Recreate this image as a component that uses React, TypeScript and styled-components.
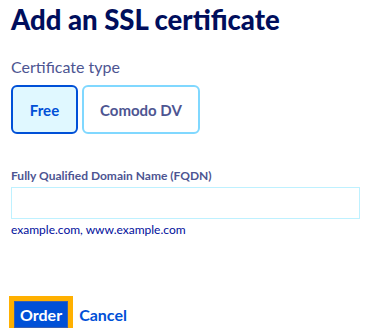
import React from "react";
import styled, { createGlobalStyle } from "styled-components";

const GlobalStyle = createGlobalStyle`
  body {
    margin: 0;
    background: #fff;
    font-family: "Lato", "Liberation Sans", sans-serif;
  }
`;

const App: React.FC = () => {
  const [type, setType] = React.useState("free");
  return (
    <Page>
      <GlobalStyle />
      <Title>Add an SSL certificate</Title>
      <Legend>Certificate type</Legend>
      <Tiles>
        <Tile $active={type === "free"} onClick={() => setType("free")}>
          Free
        </Tile>
        <Tile $active={type === "comodo"} onClick={() => setType("comodo")}>
          Comodo DV
        </Tile>
      </Tiles>
      {/* domain field */}
      <Field>
        <Label htmlFor="fqdn">Fully Qualified Domain Name (FQDN)</Label>
        <Input id="fqdn" type="text" />
        <Hint>example.com, www.example.com</Hint>
      </Field>
      <Actions>
        <Primary>Order</Primary>
        <LinkButton>Cancel</LinkButton>
      </Actions>
    </Page>
  );
};

const Page = styled.div`
  padding: 0 11px;
  display: flex;
  flex-direction: column;
`;

const Title = styled.h1`
  margin: 3px 0 0;
  font-size: 27.5px;
  line-height: 34px;
  font-weight: 900;
  color: #000e5c;
`;

const Legend = styled.div`
  margin-top: 20px;
  font-size: 16px;
  line-height: 20px;
  color: #4d5592;
`;

const Tiles = styled.div`
  display: flex;
  gap: 4px;
  margin-top: 8px;
`;

const Tile = styled.button<{ $active: boolean }>`
  min-width: 67px;
  height: 49px;
  padding: 0 16px;
  border: 2px solid ${(p) => (p.$active ? "#0050d7" : "#80d8ff")};
  border-radius: 6px;
  background: ${(p) => (p.$active ? "#e0f8ff" : "#fff")};
  color: ${(p) => (p.$active ? "#0050d7" : "#4d5592")};
  font-family: inherit;
  font-size: 15px;
  font-weight: 700;
  cursor: pointer;
`;

const Field = styled.div`
  display: flex;
  flex-direction: column;
  margin-top: 34px;
`;

const Label = styled.label`
  font-size: 12px;
  line-height: 16px;
  font-weight: 700;
  color: #4d5592;
`;

const Input = styled.input`
  box-sizing: border-box;
  height: 32px;
  margin-top: 3px;
  border: 1px solid #bef1ff;
  border-radius: 0;
  outline: none;
`;

const Hint = styled.div`
  margin-top: 3px;
  font-size: 12px;
  line-height: 16px;
  color: #000e9c;
`;

const Actions = styled.div`
  display: flex;
  align-items: center;
  gap: 11px;
  margin-top: 63px;
  padding-left: 3px;
`;

const Primary = styled.button`
  box-sizing: border-box;
  height: 27px;
  padding: 0 5px;
  border: 1px solid #3a5fb0;
  background: #0050d7;
  color: #fff;
  font-family: inherit;
  font-size: 16px;
  font-weight: 700;
  outline: 5px solid #ffb000;
`;

const LinkButton = styled.button`
  padding: 0;
  border: none;
  background: none;
  color: #0050d7;
  font-family: inherit;
  font-size: 16px;
  font-weight: 700;
`;

export default App;
